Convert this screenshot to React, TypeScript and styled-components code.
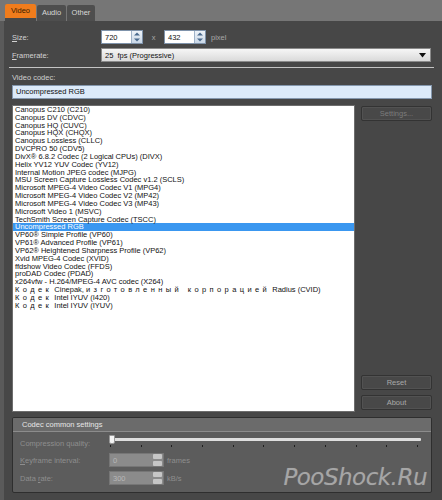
import styled, { createGlobalStyle } from "styled-components"

const GlobalStyle = createGlobalStyle`
  html, body { margin: 0; padding: 0; background: #595959; }
  body { font-family: "Liberation Sans", Arial, sans-serif; }
`

const codecs = [
  "Canopus C210 (C210)",
  "Canopus DV (CDVC)",
  "Canopus HQ (CUVC)",
  "Canopus HQX (CHQX)",
  "Canopus Lossless (CLLC)",
  "DVCPRO 50 (CDV5)",
  "DivX® 6.8.2 Codec (2 Logical CPUs) (DIVX)",
  "Helix YV12 YUV Codec (YV12)",
  "Internal Motion JPEG codec (MJPG)",
  "MSU Screen Capture Lossless Codec v1.2 (SCLS)",
  "Microsoft MPEG-4 Video Codec V1 (MPG4)",
  "Microsoft MPEG-4 Video Codec V2 (MP42)",
  "Microsoft MPEG-4 Video Codec V3 (MP43)",
  "Microsoft Video 1 (MSVC)",
  "TechSmith Screen Capture Codec (TSCC)",
  "Uncompressed RGB",
  "VP60® Simple Profile  (VP60)",
  "VP61® Advanced Profile (VP61)",
  "VP62® Heightened Sharpness Profile (VP62)",
  "Xvid MPEG-4 Codec (XVID)",
  "ffdshow Video Codec (FFDS)",
  "proDAD Codec (PDAD)",
  "x264vfw - H.264/MPEG-4 AVC codec (X264)",
]

const SpinArrows = () => (
  <svg width="8" height="12" viewBox="0 0 8 12">
    <path d="M4 1.5 L7 4.5 H1 Z" fill="#4a6a8e" />
    <path d="M4 10.5 L7 7.5 H1 Z" fill="#4a6a8e" />
  </svg>
)

export default function App() {
  return (
    <Window>
      <GlobalStyle />
      <TabBar>
        <Tab $active $w={31}>Video</Tab>
        <Tab $w={29}>Audio</Tab>
        <Tab $w={28}>Other</Tab>
      </TabBar>
      <Panel>
        <FormRow>
          <Label><u>S</u>ize:</Label>
          <SpinInput>
            <span>720</span>
            <SpinButton><SpinArrows /></SpinButton>
          </SpinInput>
          <Times>x</Times>
          <SpinInput>
            <span>432</span>
            <SpinButton><SpinArrows /></SpinButton>
          </SpinInput>
          <Unit>pixel</Unit>
        </FormRow>
        <FormRow $top={4}>
          <Label><u>F</u>ramerate:</Label>
          <Combo>
            <span>25&nbsp;&nbsp;fps (Progressive)</span>
            <svg width="7" height="5" viewBox="0 0 7 5">
              <path d="M0 0 H7 L3.5 4.5 Z" fill="#111" />
            </svg>
          </Combo>
        </FormRow>
        <Divider />
        <SectionLabel>Video codec:</SectionLabel>
        <CodecField>Uncompressed RGB</CodecField>
        <Middle>
          <ListBox>
            {codecs.map((c) => (
              <Item key={c} $selected={c === "Uncompressed RGB"}>{c}</Item>
            ))}
            <Item>
              <Spaced>Кодек</Spaced> Cinepak, <Spaced>изготовленный корпорацией</Spaced> Radius (CVID)
            </Item>
            <Item>
              <Spaced>Кодек</Spaced> Intel IYUV (I420)
            </Item>
            <Item>
              <Spaced>Кодек</Spaced> Intel IYUV (IYUV)
            </Item>
          </ListBox>
          <SideColumn>
            <Button $dim>Settings...</Button>
            <ButtonStack>
              <Button>Reset</Button>
              <Button>About</Button>
            </ButtonStack>
          </SideColumn>
        </Middle>
        <Group>
          <GroupHeader>Codec common settings</GroupHeader>
          <GroupBody>
            <GroupRow $h={16}>
              <GroupLabel>Compression quality:</GroupLabel>
              <Slider>
                <Track />
                <Thumb />
                <Ticks>
                  {Array.from({ length: 11 }).map((_, i) => (
                    <Tick key={i} />
                  ))}
                </Ticks>
              </Slider>
            </GroupRow>
            <GroupRow $h={14} $top={2}>
              <GroupLabel><u>K</u>eyframe interval:</GroupLabel>
              <DimSpin>
                <span>0</span>
                <DimSpinButtons><i /><i /></DimSpinButtons>
              </DimSpin>
              <DimUnit>frames</DimUnit>
            </GroupRow>
            <GroupRow $h={14} $top={4}>
              <GroupLabel>Data <u>r</u>ate:</GroupLabel>
              <DimSpin>
                <span>300</span>
                <DimSpinButtons><i /><i /></DimSpinButtons>
              </DimSpin>
              <DimUnit>kB/s</DimUnit>
            </GroupRow>
          </GroupBody>
          <Watermark>PooShock.Ru</Watermark>
        </Group>
      </Panel>
    </Window>
  )
}

const Window = styled.div`
  width: 442px;
  height: 500px;
  display: flex;
  flex-direction: column;
  background: #767676;
  overflow: hidden;
`

const TabBar = styled.div`
  height: 21px;
  display: flex;
  align-items: flex-end;
  padding-left: 5px;
  gap: 1px;
`

const Tab = styled.div<{ $active?: boolean; $w: number }>`
  width: ${(p) => p.$w}px;
  height: ${(p) => (p.$active ? 14 : 16)}px;
  margin-bottom: ${(p) => (p.$active ? 3 : 0)}px;
  box-shadow: ${(p) => (p.$active ? "0 3px 0 #484848" : "none")};
  background: ${(p) => (p.$active ? "#f07c1c" : "#4e4e4e")};
  border-radius: 2px 2px 0 0;
  color: ${(p) => (p.$active ? "#3a2000" : "#d8d8d8")};
  font-size: 7.5px;
  line-height: ${(p) => (p.$active ? 14 : 16)}px;
  text-align: center;
`

const Panel = styled.div`
  flex: 1;
  background: #474747;
  border-left: 4px solid #5a5a5a;
  padding: 9px 10px 0 8px;
  display: flex;
  flex-direction: column;
  font-size: 7.5px;
  color: #cfcfcf;
`

const FormRow = styled.div<{ $top?: number }>`
  display: flex;
  align-items: center;
  height: 14px;
  margin-top: ${(p) => p.$top ?? 0}px;
`

const Label = styled.div`
  width: 89px;
  flex: none;
  color: #d2d2d2;
`

const SpinInput = styled.div`
  width: 42px;
  height: 14px;
  box-sizing: border-box;
  background: #fff;
  border: 1px solid #7f93ab;
  display: flex;
  align-items: center;
  justify-content: space-between;
  color: #111;
  span {
    padding-left: 3px;
  }
`

const SpinButton = styled.div`
  width: 10px;
  height: 12px;
  background: linear-gradient(#eef3f9, #c9d7e7);
  border-left: 1px solid #9fb2c8;
  display: flex;
  align-items: center;
  justify-content: center;
`

const Times = styled.div`
  width: 21px;
  text-align: center;
  color: #a8a8a8;
`

const Unit = styled.div`
  margin-left: 5px;
  color: #a8a8a8;
`

const Combo = styled.div`
  flex: 1;
  height: 14px;
  box-sizing: border-box;
  border: 1px solid #8a8a8a;
  background: linear-gradient(#f6f6f6, #dadada);
  display: flex;
  align-items: center;
  justify-content: space-between;
  padding: 0 4px 0 3px;
  color: #111;
  margin-right: 1px;
`

const Divider = styled.div`
  height: 1px;
  background: #c4c4c4;
  margin: 5px -2px 0 -3px;
`

const SectionLabel = styled.div`
  margin-top: 5px;
  height: 9px;
  line-height: 9px;
  color: #cfcfcf;
`

const CodecField = styled.div`
  margin-top: 3px;
  height: 14px;
  box-sizing: border-box;
  background: #dceaf9;
  border: 1px solid #8497ad;
  padding-left: 3px;
  line-height: 12px;
  color: #111;
`

const Middle = styled.div`
  margin-top: 6px;
  height: 307px;
  display: flex;
  gap: 6px;
`

const ListBox = styled.div`
  width: 343px;
  box-sizing: border-box;
  background: #fff;
  border: 1px solid #6d6d6d;
  overflow: hidden;
`

const Item = styled.div<{ $selected?: boolean }>`
  height: 7.84px;
  line-height: 7.84px;
  padding-left: 2px;
  white-space: nowrap;
  color: ${(p) => (p.$selected ? "#fff" : "#111")};
  background: ${(p) => (p.$selected ? "#3a97f0" : "transparent")};
`

const Spaced = styled.span`
  letter-spacing: 3.4px;
`

const SideColumn = styled.div`
  flex: 1;
  display: flex;
  flex-direction: column;
  justify-content: space-between;
  padding: 1px 0 2px;
`

const ButtonStack = styled.div`
  display: flex;
  flex-direction: column;
  gap: 5px;
`

const Button = styled.div<{ $dim?: boolean }>`
  height: 15px;
  box-sizing: border-box;
  border: 1px solid #333;
  border-radius: 2px;
  box-shadow: inset 0 0 0 1px #525252;
  background: #484848;
  color: ${(p) => (p.$dim ? "#7c7c7c" : "#a9a9a9")};
  text-align: center;
  line-height: 13px;
`

const Group = styled.div`
  position: relative;
  margin-top: 5px;
  height: 76px;
  box-sizing: border-box;
  border: 1px solid #2e2e2e;
  border-radius: 2px;
  background: #5c5c5c;
  overflow: hidden;
`

const GroupHeader = styled.div`
  height: 13px;
  line-height: 13px;
  background: #6b6b6b;
  border-bottom: 1px solid #8c8c8c;
  padding-left: 9px;
  color: #e6e6e6;
`

const GroupBody = styled.div`
  padding: 3px 9px 0 7px;
  display: flex;
  flex-direction: column;
`

const GroupRow = styled.div<{ $h: number; $top?: number }>`
  height: ${(p) => p.$h}px;
  margin-top: ${(p) => p.$top ?? 0}px;
  display: flex;
  align-items: center;
`

const GroupLabel = styled.div`
  width: 89px;
  flex: none;
  color: #8e8e8e;
`

const Slider = styled.div`
  position: relative;
  width: 312px;
  height: 16px;
  display: flex;
  flex-direction: column;
`

const Track = styled.div`
  margin-top: 3px;
  height: 3px;
  background: #dedede;
  border-radius: 1px;
`

const Thumb = styled.div`
  position: absolute;
  left: 0;
  top: 0;
  width: 4px;
  height: 7px;
  background: #f4f4f4;
  border: 1px solid #999;
  border-radius: 1px 1px 2px 2px;
`

const Ticks = styled.div`
  margin-top: 4px;
  padding: 0 3px 0 1px;
  display: flex;
  justify-content: space-between;
`

const Tick = styled.div`
  width: 1px;
  height: 2px;
  background: #1e1e1e;
`

const DimSpin = styled.div`
  width: 55px;
  height: 14px;
  box-sizing: border-box;
  background: #8b8b8b;
  border: 1px solid #767676;
  display: flex;
  align-items: center;
  justify-content: space-between;
  color: #b8b8b8;
  span {
    padding-left: 3px;
  }
`

const DimSpinButtons = styled.div`
  width: 9px;
  height: 12px;
  display: flex;
  flex-direction: column;
  justify-content: space-between;
  padding: 0 1px 0 0;
  i {
    height: 5px;
    background: #c6c6c6;
    border-radius: 1px;
  }
`

const DimUnit = styled.div`
  margin-left: 3px;
  color: #8e8e8e;
`

const Watermark = styled.div`
  position: absolute;
  right: 4px;
  bottom: 1px;
  line-height: 28px;
  font-family: "DejaVu Sans", sans-serif;
  font-style: italic;
  font-size: 23px;
  letter-spacing: -0.5px;
  color: #a6a6a6;
  text-shadow: 0 0 1px #777;
`
